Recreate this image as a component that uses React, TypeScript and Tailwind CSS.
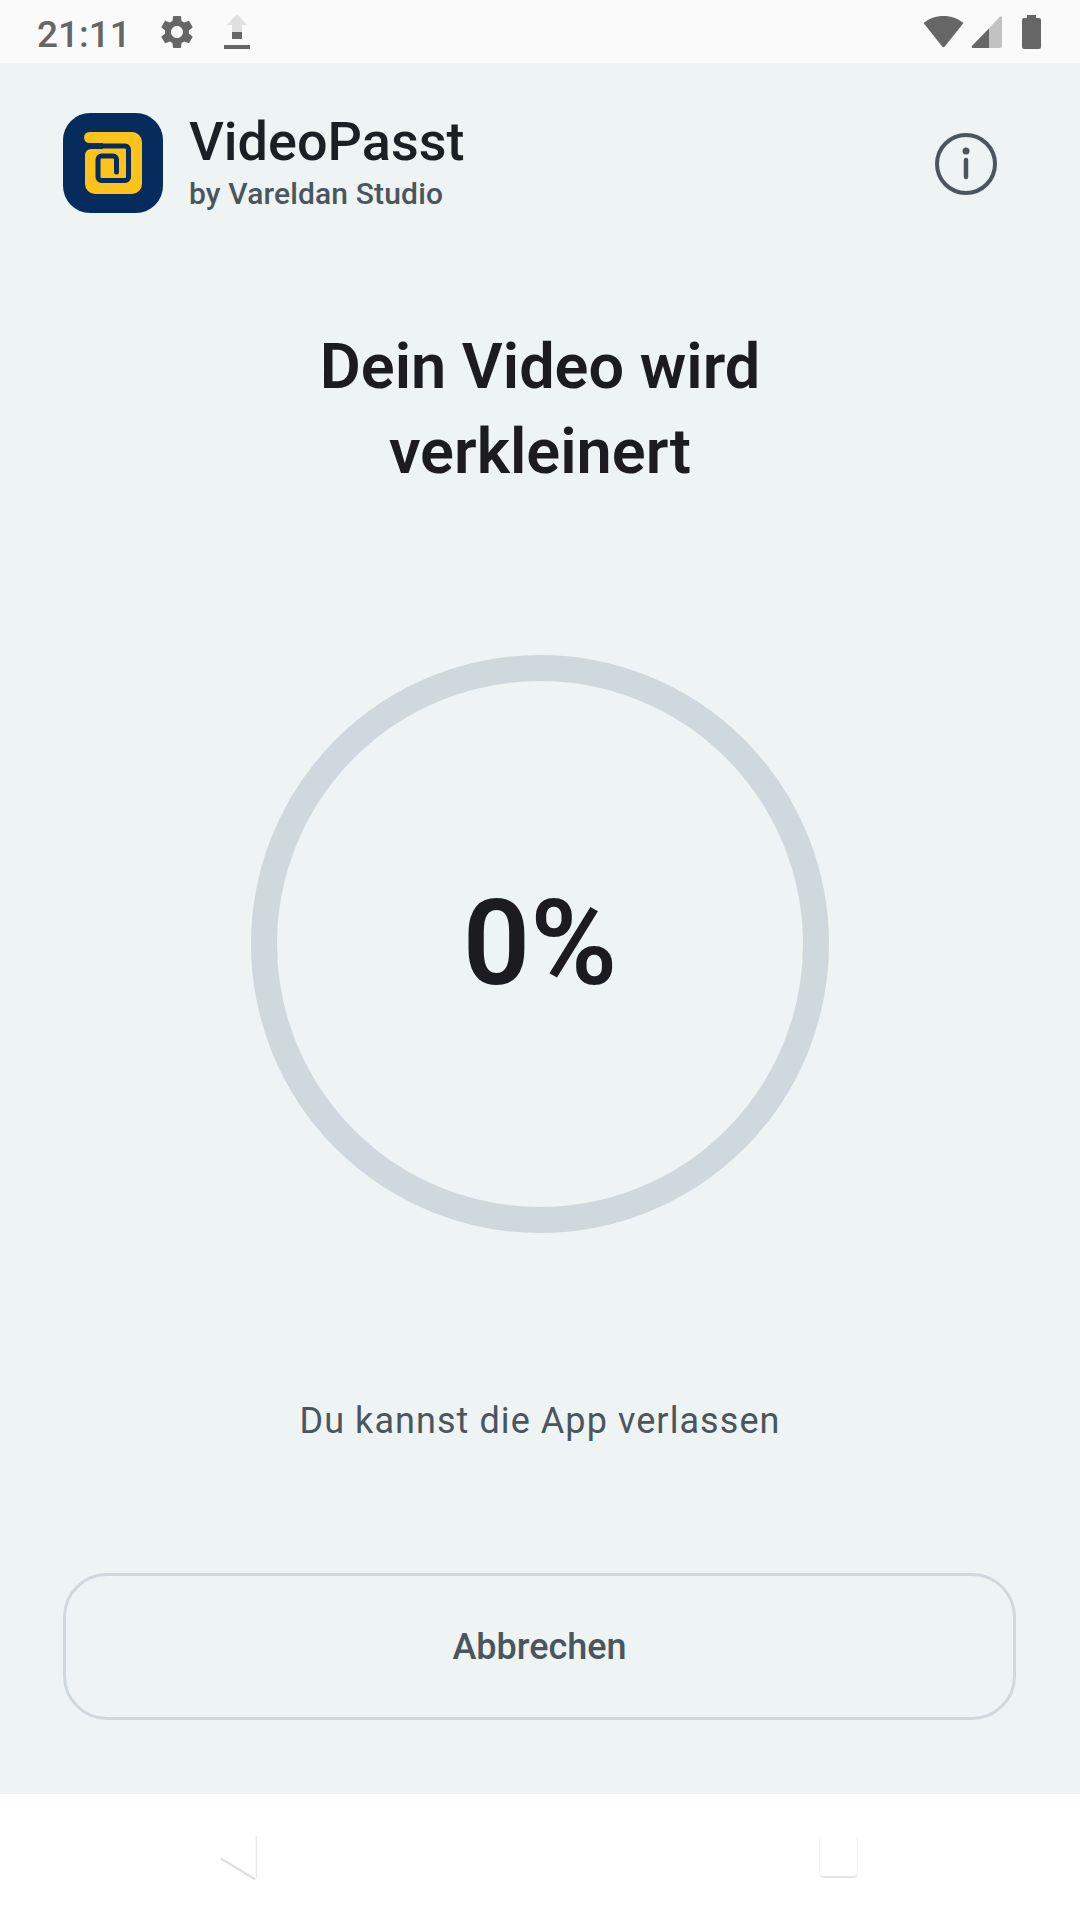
import React from "react";

const Logo = () => (
  <svg width="100" height="100" viewBox="0 0 100 100" className="shrink-0">
    <rect width="100" height="100" rx="27" fill="#052c5c" />
    <path
      d="M26.5 19H69a10 10 0 0 1 10 10V71a10 10 0 0 1-10 10H32a10 10 0 0 1-10-10V42a6 6 0 0 1 6-6H40V30H26.5a5.5 5.5 0 0 1 0-11Z"
      fill="#fdc31b"
    />
    <path
      d="M30 33H62a3.5 3.5 0 0 1 3.5 3.5V64a3.5 3.5 0 0 1-3.5 3.5H38.5a3.5 3.5 0 0 1-3.5-3.5V46.5a3.5 3.5 0 0 1 3.5-3.5H50a3.5 3.5 0 0 1 3.5 3.5V59"
      fill="none"
      stroke="#052c5c"
      strokeWidth="5"
      strokeLinecap="round"
    />
  </svg>
);

const StatusBar = () => (
  <div className="flex h-[63px] shrink-0 items-center justify-between bg-[#fafafa] pl-[37px] pr-[39px] text-[#666666]">
    <div className="flex items-center">
      <span className="pt-[5px] text-[37px] font-medium leading-none">21:11</span>
      <svg width="40" height="40" viewBox="0 0 24 24" fill="#666666" className="ml-[26px]">
        <path d="M19.14 12.94c.04-.3.06-.61.06-.94 0-.32-.02-.64-.07-.94l2.03-1.58c.18-.14.23-.41.12-.61l-1.92-3.32c-.12-.22-.37-.29-.59-.22l-2.39.96c-.5-.38-1.03-.7-1.62-.94l-.36-2.54c-.04-.24-.24-.41-.48-.41h-3.84c-.24 0-.43.17-.47.41l-.36 2.54c-.59.24-1.13.57-1.62.94l-2.39-.96c-.22-.08-.47 0-.59.22L2.74 8.87c-.12.21-.08.47.12.61l2.03 1.58c-.05.3-.09.63-.09.94s.02.64.07.94l-2.03 1.58c-.18.14-.23.41-.12.61l1.92 3.32c.12.22.37.29.59.22l2.39-.96c.5.38 1.03.7 1.62.94l.36 2.54c.05.24.24.41.48.41h3.84c.24 0 .44-.17.47-.41l.36-2.54c.59-.24 1.13-.56 1.62-.94l2.39.96c.22.08.47 0 .59-.22l1.92-3.32c.12-.22.07-.47-.12-.61l-2.01-1.58zM12 15.6c-1.98 0-3.6-1.62-3.6-3.6s1.62-3.6 3.6-3.6 3.6 1.62 3.6 3.6-1.62 3.6-3.6 3.6z" />
      </svg>
      <svg width="26" height="36" viewBox="0 0 26 36" className="ml-[27px]">
        <path d="M13 0L23 11H18V25H8V11H3Z" fill="#e0e0e0" />
        <rect x="8" y="18" width="10" height="7" fill="#666666" />
        <rect x="0" y="31" width="26" height="4" fill="#666666" />
      </svg>
    </div>
    <div className="flex items-center">
      <svg width="41" height="32" viewBox="0 0 41 32">
        <path d="M20.5 0C28 0 35 2.5 40.5 7L21.8 30.5a1.7 1.7 0 0 1-2.6 0L.5 7C6 2.5 13 0 20.5 0Z" fill="#666666" />
      </svg>
      <svg width="31" height="32" viewBox="0 0 31 32" className="ml-[7px]">
        <path d="M29 0.5a1.5 1.5 0 0 1 2 1.5V30a2 2 0 0 1-2 2H2a1.2 1.2 0 0 1-1-2Z" fill="#c2c2c2" />
        <path d="M18 12.5V32H2a1.2 1.2 0 0 1-1-2Z" fill="#666666" />
      </svg>
      <svg width="19" height="34" viewBox="0 0 19 34" className="ml-[20px]">
        <path d="M5 0H14V3H17a2 2 0 0 1 2 2V32a2 2 0 0 1-2 2H2a2 2 0 0 1-2-2V5a2 2 0 0 1 2-2H5Z" fill="#666666" />
      </svg>
    </div>
  </div>
);

export default function App() {
  return (
    <div className="flex h-[1920px] w-[1080px] flex-col overflow-hidden bg-white font-['Roboto',sans-serif]">
      <StatusBar />

      <div className="flex flex-1 flex-col bg-[#eef3f4] px-[63px]">
        <div className="mt-[50px] flex items-center">
          <Logo />
          <div className="ml-[26px] flex flex-col">
            <span className="text-[54px] font-medium leading-[60px] text-[#1a2124] -mt-[2px]">VideoPasst</span>
            <span className="mt-[4px] text-[30px] font-medium leading-[36px] tracking-[0.15px] text-[#4a565c]">by Vareldan Studio</span>
          </div>
          <svg width="62" height="62" viewBox="0 0 62 62" className="ml-auto mr-[20px] mt-[2px]">
            <circle cx="31" cy="31" r="29" fill="none" stroke="#4a565c" strokeWidth="4" />
            <circle cx="31" cy="18" r="3.5" fill="#4a565c" />
            <path d="M31 27V44" stroke="#4a565c" strokeWidth="4.5" strokeLinecap="round" />
          </svg>
        </div>

        <h1 className="mt-[111px] text-center text-[63px] font-[560] leading-[85px] text-[#1c1b1f]">
          Dein Video wird
          <br />
          verkleinert
        </h1>

        <div className="mx-auto mt-[161px] flex h-[578px] w-[578px] items-center justify-center rounded-full border-[26px] border-[#cfd8dc]">
          <span className="text-[118px] font-[560] leading-none text-[#1c1b1f]">0%</span>
        </div>

        <p className="mt-[164px] text-center text-[36px] leading-[48px] tracking-[1.07px] text-[#4a565c]">
          Du kannst die App verlassen
        </p>

        <button className="mt-[128px] flex h-[147px] w-[953px] items-center justify-center rounded-[44px] border-[3px] border-[#cfd8dc] text-[36px] font-medium text-[#4a565c]">
          Abbrechen
        </button>
      </div>

      <div className="flex h-[126px] shrink-0 items-center justify-between bg-white pl-[218px] pr-[222px]">
        <svg width="40" height="46" viewBox="0 0 40 46">
          <path d="M3 24L37 44.5a1.5 1.5 0 0 0 1.5-1.5V2" fill="none" stroke="#ececec" strokeWidth="1.5" />
          <path d="M3 25L37 45.5" fill="none" stroke="#dddddd" strokeWidth="1.5" />
        </svg>
        <div className="h-[41px] w-[39px] rounded-[5px] border border-t-0 border-[#f1f1f1] border-b-[2px] border-b-[#e6e6e6]" />
      </div>
    </div>
  );
}
